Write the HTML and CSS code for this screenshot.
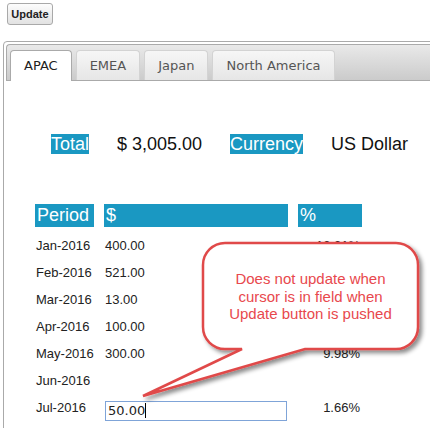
FILE: index.html
```html
<!DOCTYPE html>
<html>
<head>
<meta charset="utf-8">
<link rel="stylesheet" href="styles.css">
</head>
<body>
<div class="toolbar"><button class="btn">Update</button></div>
<div class="tabs">
  <div class="tab-nav">
    <div class="tab active">APAC</div>
    <div class="tab">EMEA</div>
    <div class="tab">Japan</div>
    <div class="tab">North America</div>
  </div>
  <div class="tab-panel">
    <div class="summary">
      <div><span class="hl">Total</span></div>
      <div class="val">$ 3,005.00</div>
      <div><span class="hl">Currency</span></div>
      <div class="val">US Dollar</div>
    </div>
    <div class="grid">
      <div class="th">Period</div><div class="th">$</div><div class="th">%</div>
      <div class="td">Jan-2016</div><div class="td">400.00</div><div class="td pct">13.31%</div>
      <div class="td">Feb-2016</div><div class="td">521.00</div><div class="td pct"></div>
      <div class="td">Mar-2016</div><div class="td">13.00</div><div class="td pct"></div>
      <div class="td">Apr-2016</div><div class="td">100.00</div><div class="td pct"></div>
      <div class="td">May-2016</div><div class="td">300.00</div><div class="td pct">9.98%</div>
      <div class="td">Jun-2016</div><div class="td"></div><div class="td pct"></div>
      <div class="td">Jul-2016</div><div class="td cell-input"><div class="field" role="textbox">50.00<span class="caret"></span></div></div><div class="td pct">1.66%</div>
    </div>
  </div>
</div>
<svg class="callout" width="430" height="428" viewBox="0 0 430 428">
  <defs>
    <filter id="sh" x="-20%" y="-20%" width="150%" height="160%">
      <feDropShadow dx="3" dy="3" stdDeviation="2" flood-color="#000" flood-opacity="0.45"/>
    </filter>
  </defs>
  <path filter="url(#sh)" d="M225 243 H396 A22 22 0 0 1 418 265 V327 A22 22 0 0 1 396 349 H305 L143 396 L242 349 H225 A22 22 0 0 1 203 327 V265 A22 22 0 0 1 225 243 Z" fill="#fff" stroke="#e04a4a" stroke-width="2.5" stroke-linejoin="miter"/>
  <text class="callout-text" x="310.5" y="284" text-anchor="middle">Does not update when</text>
  <text class="callout-text" x="310.5" y="302" text-anchor="middle">cursor is in field when</text>
  <text class="callout-text" x="310.5" y="319" text-anchor="middle">Update button is pushed</text>
</svg>
</body>
</html>
```

FILE: styles.css
```css
*, *::before, *::after {
  box-sizing: border-box;
}
html, body {
  margin: 0;
  padding: 0;
  overflow: hidden;
  background: #fff;
}
body {
  position: relative;
  width: 430px;
  height: 428px;
  font-family: "Liberation Sans", Arial, sans-serif;
  color: #222;
}
.toolbar {
  padding: 3px 0 0 7px;
  height: 25px;
}
.btn {
  display: block;
  width: 46px;
  height: 22px;
  padding: 0;
  margin: 0;
  border: 1px solid #a9a9a9;
  border-radius: 3px;
  background: linear-gradient(#fdfdfd, #e2e2e2);
  font-family: "Liberation Sans", Arial, sans-serif;
  font-weight: bold;
  font-size: 11px;
  color: #222;
}
.tabs {
  margin: 16px -40px 0 3px;
  border: 1px solid #aaa;
  border-radius: 4px 0 0 0;
  padding: 2px 0 0 2px;
  height: 420px;
}
.tab-nav {
  display: flex;
  align-items: flex-start;
  height: 37px;
  padding: 5px 0 0 3px;
  border: 1px solid #aaa;
  border-right: none;
  border-radius: 4px 0 0 0;
  background: linear-gradient(#e9e9e9, #cbcbcb);
}
.tab {
  height: 30px;
  line-height: 30px;
  padding: 0 13px;
  margin-right: 4px;
  border: 1px solid #d3d3d3;
  border-bottom: none;
  border-radius: 4px 4px 0 0;
  background: linear-gradient(#f6f6f6, #e6e6e6);
  font-family: "DejaVu Sans", Verdana, sans-serif;
  font-size: 13px;
  color: #555;
  position: relative;
}
.tab.active {
  height: 31px;
  background: #fff;
  border-color: #aaa;
  color: #212121;
  z-index: 1;
}
.tab-panel {
  padding: 53px 0 20px 0;
  margin-left: -2px;
}
.summary {
  display: grid;
  grid-template-columns: 66px 113px 101px auto;
  margin-left: 47px;
  height: 20px;
  font-size: 18px;
  line-height: 20px;
}
.hl {
  display: inline-block;
  height: 20px;
  line-height: 20px;
  background: #1a98c2;
  color: #fff;
}
.val {
  color: #111;
}
.grid {
  display: grid;
  grid-template-columns: 59px 184px 64px;
  column-gap: 10px;
  margin: 50px 0 0 31px;
}
.th {
  height: 23px;
  line-height: 23px;
  margin-bottom: 5px;
  padding-left: 2px;
  background: #1a98c2;
  color: #fff;
  font-size: 18px;
}
.td {
  height: 27px;
  line-height: 27px;
  padding-left: 1px;
  font-size: 13px;
  color: #222;
  white-space: nowrap;
}
.td.pct {
  text-align: right;
  padding: 0 2px 0 0;
}
.cell-input {
  display: flex;
  align-items: flex-end;
  padding-left: 1px;
}
.field {
  width: 182px;
  height: 20px;
  line-height: 18px;
  padding-left: 2px;
  border: 1px solid #7fa4d8;
  font-family: "DejaVu Sans", Verdana, sans-serif;
  font-size: 13px;
  color: #222;
  background: #fff;
}
.caret {
  display: inline-block;
  width: 1px;
  height: 15px;
  background: #000;
  vertical-align: -3px;
}
.callout {
  position: absolute;
  left: 0;
  top: 0;
  overflow: visible;
  pointer-events: none;
}
.callout-text {
  font-family: "Liberation Sans", Arial, sans-serif;
  font-size: 15px;
  fill: #e8484d;
}
```
